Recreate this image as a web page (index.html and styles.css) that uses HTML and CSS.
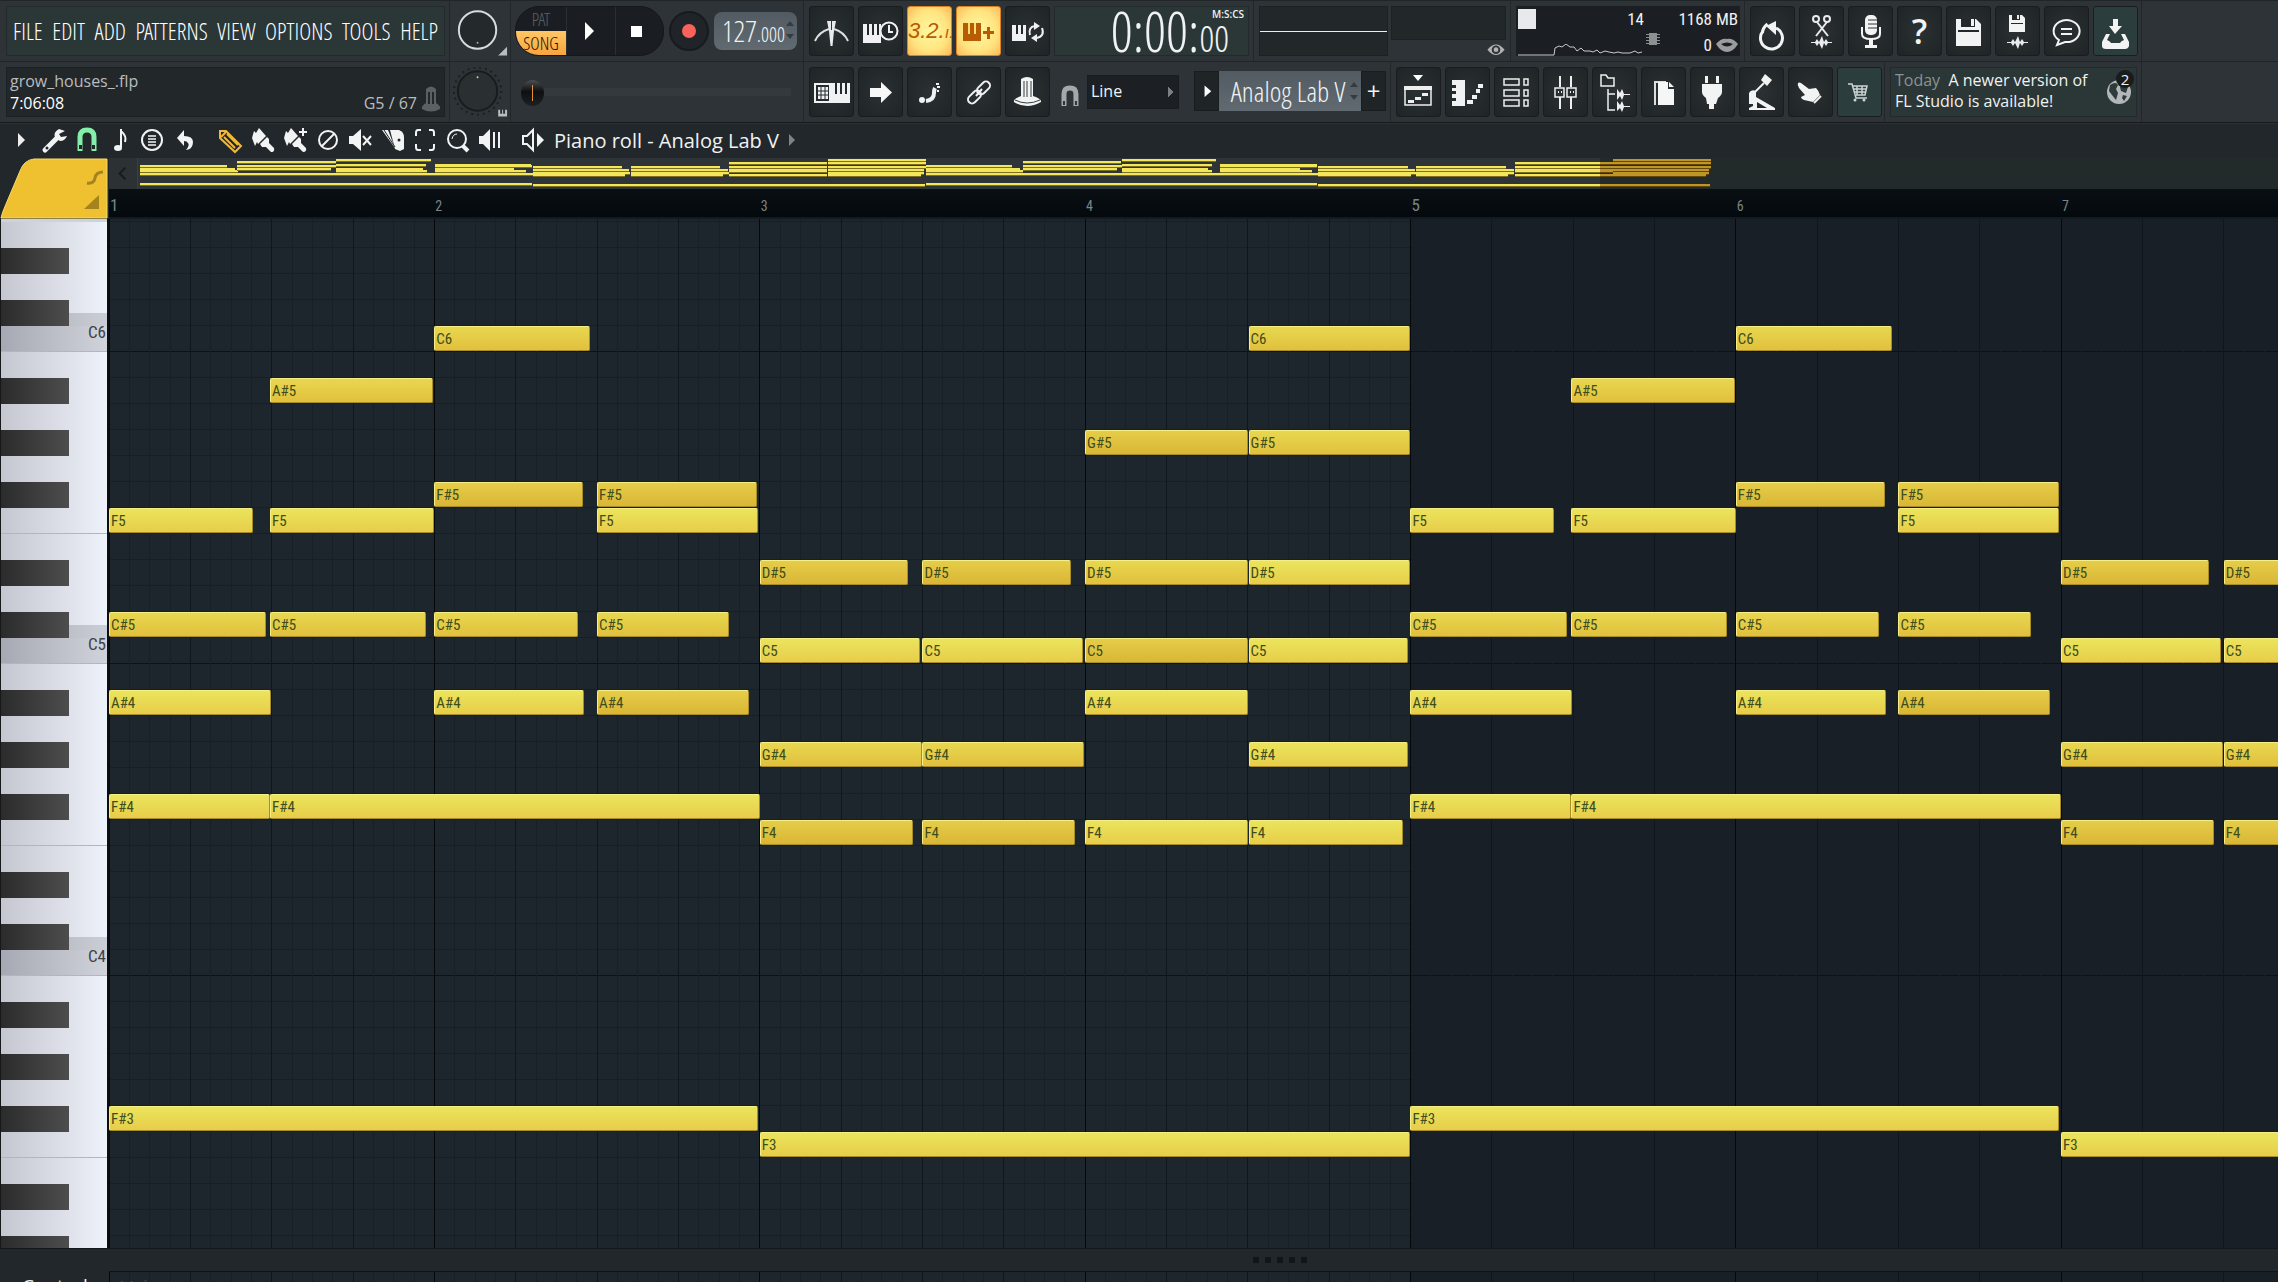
FILE: index.html
```
<!DOCTYPE html>
<html lang="en">
<head>
<meta charset="utf-8">
<title>Piano roll - Analog Lab V</title>
<link rel="stylesheet" href="styles.css">
</head>
<body>
<header class="toolbar">
  <div class="bar">
    <div class="group g-menu">
      <nav class="menu panel green">
        <button>FILE</button><button>EDIT</button><button>ADD</button><button>PATTERNS</button><button>VIEW</button><button>OPTIONS</button><button>TOOLS</button><button>HELP</button>
      </nav>
    </div>
    <div class="group g-knob">
      <svg class="knob" viewBox="0 0 61 50"><circle cx="28" cy="24" r="19" fill="#24292c" stroke="#d5dcdf" stroke-width="2"/><circle cx="28" cy="37" r="1" fill="#aaa"/><path d="M58 41v9h-9z" fill="#b9bdbf"/></svg>
    </div>
    <div class="group g-transport">
      <div class="transport">
        <div class="mode"><button class="pat">PAT</button><button class="song">SONG</button></div>
        <button class="tbtn" aria-label="Play"><svg viewBox="0 0 45 48"><path d="M18 15l9 9-9 9z" fill="#fff"/></svg></button>
        <button class="tbtn" aria-label="Stop"><svg viewBox="0 0 45 48"><path d="M15 19h11v11H15z" fill="#fff"/></svg></button>
      </div>
      <button class="record" aria-label="Record"><span></span></button>
      <div class="tempo"><span>127<small>.000</small></span><svg viewBox="0 0 8 20"><path d="M4 1l4 5H0zM4 19l4-5H0z" fill="#343c41"/></svg></div>
    </div>
    <div class="group g-mid">
      <button class="btn" aria-label="Metronome"><svg viewBox="0 0 45 50"><path d="M6 35Q10 26 20 23M39 35Q35 26 25 23" fill="none" stroke="#dde0e1" stroke-width="2"/><path d="M18 15h9l-2 10-1.500 15h-2L20 25z" fill="#e8eaeb"/><path d="M22.500 14v10" stroke="#333" stroke-width="1"/></svg></button>
      <button class="btn" aria-label="Wait for input"><svg viewBox="0 0 45 50"><path d="M5 18h18v19H5z" fill="#f0f1f2"/><path d="M10 18v11M15 18v11M20 18v11" stroke="#23282b" stroke-width="2"/><circle cx="31" cy="25" r="8.500" fill="#23282b" stroke="#f0f1f2" stroke-width="2"/><path d="M31 19v7h4" fill="none" stroke="#f0f1f2" stroke-width="2"/></svg></button>
      <button class="btn lit countdown">3.2.<small>ı.</small></button>
      <button class="btn lit" aria-label="Overdub"><svg viewBox="0 0 45 50"><path d="M7 17h18v18H7zM31 21h3v4h4v3h-4v5h-3v-5h-4v-3h4z" fill="#b55c05"/><path d="M13 17v11M19 17v11" stroke="#ffdd75" stroke-width="2"/></svg></button>
      <button class="btn" aria-label="Loop recording"><svg viewBox="0 0 45 50"><path d="M7 19h14v16H7z" fill="#f0f1f2"/><path d="M12 19v9M17 19v9" stroke="#23282b" stroke-width="2"/><path d="M25 29q-2-8 5-9M37 22q3 8-5 10" fill="none" stroke="#f0f1f2" stroke-width="2"/><path d="M29 16l6 4-6 4zM32 28l-6 4 6 4z" fill="#f0f1f2"/></svg></button>
      <div class="time panel green"><span>0:00:<small>00</small></span><em>M:S:CS</em></div>
    </div>
    <div class="group g-scope">
      <div class="scope"></div>
      <div class="scope-side"><div class="spectrum"></div><svg viewBox="0 0 20 14"><path d="M1 7Q10-4 19 7Q10 18 1 7z" fill="#b0b2b3"/><circle cx="10" cy="7" r="3.500" fill="none" stroke="#2d3337" stroke-width="2"/></svg></div>
    </div>
    <div class="group g-cpu">
      <div class="cpu">
        <div class="cpu-left">
          <div class="cpu-top"><i></i><b>14</b></div>
          <svg viewBox="0 0 126 12"><path d="M0 11h36l1-7 4-2 3 1 4-3 4 3 4 0 3 4 4-3 3 3h6l3 1 4-2 3 3 5-2 4 1 5 1 4-1 4 1 8 0 5-2 3 2 4-1" fill="none" stroke="#c8cbcc"/></svg>
        </div>
        <div class="cpu-right">
          <b>1168 MB</b>
          <div><svg class="chip" viewBox="0 0 14 12"><path d="M3 0h8v12H3zM0 1h14v1H0zM0 4h14v1H0zM0 7h14v1H0zM0 10h14v1H0z" fill="#8d9091"/></svg><b>0</b><svg class="mouth" viewBox="0 0 22 14"><path d="M0 6q5-6 11-5q6-1 11 5q-5 8-11 8T0 6z" fill="#9a9c9d"/><path d="M5 6q6-3 12 0q-6 5-12 0z" fill="#1b1f24"/></svg></div>
        </div>
      </div>
    </div>
    <div class="group g-tools">
      <button class="btn" aria-label="Undo"><svg viewBox="0 0 45 50"><path d="M13 24a11 11 0 1 0 13-3" fill="none" stroke="#f2f3f3" stroke-width="3" transform="translate(0 1)"/><path d="M12.500 27q0-5 5-9" fill="none" stroke="#f2f3f3" stroke-width="3"/><path d="M26 15v14l-10-9z" fill="#f2f3f3"/></svg></button>
      <button class="btn" aria-label="Cut"><svg viewBox="0 0 45 50"><g fill="none" stroke="#e9ebec" stroke-width="2"><path d="M18 16l11 14M28 16L17 30"/><circle cx="17" cy="13" r="3"/><circle cx="28" cy="13" r="3"/></g><path d="M12 36h4l2-3 2 3 3-6 2 6 2-3 2 3h4v1h-4l-2 3-2-3-2 6-3-6-2 3-2-3h-4z" fill="#e9ebec"/></svg></button>
      <button class="btn" aria-label="Microphone"><svg viewBox="0 0 45 50"><rect x="17" y="9" width="12" height="20" rx="5" fill="#f2f3f3"/><path d="M20 14h9M20 18h9M20 22h9" stroke="#333"/><path d="M14 21v7q0 5 9 5t9-5v-7" fill="none" stroke="#f2f3f3" stroke-width="2"/><path d="M21 33h4v6h4v3H17v-3h4z" fill="#f2f3f3"/></svg></button>
      <button class="btn help" aria-label="Help">?</button>
      <button class="btn" aria-label="Save"><svg viewBox="0 0 45 50"><path d="M10 13h20l5 5v22H10z" fill="#f2f3f3"/><path d="M15 13h14v8H15zM12 24h21v2H12z" fill="#23282b"/><path d="M25 13h3v7h-3z" fill="#f2f3f3"/></svg></button>
      <button class="btn" aria-label="Save version"><svg viewBox="0 0 45 50"><path d="M14 9h13l3 3v14H14z" fill="#f2f3f3"/><path d="M17 9h8v5h-8zM16 17h12v1H16z" fill="#23282b"/><path d="M22 9h2v4h-2zM12 36h4l2-3 2 3 3-6 2 6 2-3 2 3h4v1h-4l-2 3-2-3-2 6-3-6-2 3-2-3h-4z" fill="#e9ebec"/></svg></button>
      <button class="btn" aria-label="Comments"><svg viewBox="0 0 45 50"><path d="M15 34a13 11 0 1 1 6 2l-8 3z" fill="none" stroke="#f2f3f3" stroke-width="2"/><path d="M17 26h11M17 31h11" stroke="#f2f3f3" stroke-width="2" transform="translate(0 -3)"/></svg></button>
      <button class="btn teal" aria-label="Download"><svg viewBox="0 0 45 50"><path d="M20 13h5v7h4l-7 8-6-8h4zM9 36l4-8h4l-3 6q3 1 4 3h9q1-2 4-3l-3-6h4l4 8v4q-1 3-4 3H13q-4 0-4-3z" fill="#f2f3f3"/></svg></button>
    </div>
  </div>

  <div class="bar">
    <div class="group g-menu">
      <div class="hint panel">
        <p>grow_houses_.flp</p>
        <div><strong>7:06:08</strong><span>G5 / 67</span><svg viewBox="0 0 20 26"><path d="M5 3q5-5 10 0v14q5 3 4 6-9 5-18 0-1-3 4-6z" fill="#5b6062"/><path d="M8 6v12M12 6v12" stroke="#22272b" stroke-width="2"/></svg></div>
      </div>
    </div>
    <div class="group g-knob">
      <svg class="knob" viewBox="0 0 61 50"><circle cx="28" cy="24" r="24" fill="none" stroke="#1b1f22" stroke-width="2" stroke-dasharray="2 4"/><circle cx="28" cy="24" r="20" fill="#2a2f32" stroke="#181c1e" stroke-width="2"/><circle cx="28" cy="10" r="1" fill="#ccc"/><path d="M49 43h2v4h2v-4h1v4h2v-4h2v7h-9z" fill="#b9bdbf"/></svg>
    </div>
    <div class="group g-transport slide"><input type="range" aria-label="Song position" min="0" max="100" value="0"></div>
    <div class="group g-mid2">
      <button class="btn" aria-label="Typing keyboard"><svg viewBox="0 0 45 50"><path d="M6 17h15v18H6z" fill="none" stroke="#f0f1f2" stroke-width="2"/><path d="M9 20h10v12H9z" fill="#f0f1f2"/><path d="M12 20v12M16 20v12M9 24h10M9 28h10" stroke="#23282b"/><path d="M22 16h19v20H22z" fill="#f0f1f2"/><path d="M27 16v11M32 16v11M37 16v11" stroke="#23282b" stroke-width="2"/></svg></button>
      <button class="btn" aria-label="Step"><svg viewBox="0 0 45 50"><path d="M12 21h11v-6l11 10.500L23 36v-6H12z" fill="#f7f8f8"/></svg></button>
      <button class="btn" aria-label="Slide"><svg viewBox="0 0 45 50"><circle cx="15" cy="33" r="3" fill="#f0f1f2"/><path d="M19 34q8-1 8-8 0-3 1-5" fill="none" stroke="#f0f1f2" stroke-width="4"/><path d="M29 17h3M30 20h3M30 24h2" stroke="#f0f1f2" stroke-width="2"/></svg></button>
      <button class="btn" aria-label="Link"><svg viewBox="0 0 45 50"><g fill="none" stroke="#f0f1f2" stroke-width="2"><rect x="11" y="26" width="15" height="8" rx="4" transform="rotate(-45 18.500 30)"/><rect x="20" y="17" width="15" height="8" rx="4" transform="rotate(-45 27.500 21)"/></g><path d="M20 29l6-7" stroke="#f0f1f2" stroke-width="2"/></svg></button>
      <button class="btn" aria-label="Multilink"><svg viewBox="0 0 45 50"><path d="M16 12q6-4 12 0v17q9 3 8 6-14 8-27 0-1-3 7-6z" fill="#f2f3f3"/><path d="M19 14v16M22 14v16M26 14v16" stroke="#383d40" stroke-width="1"/><path d="M10 33q12 6 25 0" fill="none" stroke="#383d40"/></svg></button>
      <svg class="magnet" viewBox="0 0 20 22"><path d="M4 21V9q0-6 6-6t6 6v12" fill="none" stroke="#a6a9aa" stroke-width="5"/><path d="M3 16h2v4H3zM15 16h2v4h-2z" fill="#2d3337"/></svg>
      <select class="snap" aria-label="Snap"><option>Line</option></select>
      <div class="channel">
        <button aria-label="Preview"><svg viewBox="0 0 24 40"><path d="M10 14l7 6-7 6z" fill="#fff"/></svg></button>
        <div class="channel-name"><span>Analog Lab V</span><svg viewBox="0 0 8 20"><path d="M4 1l4 5H0zM4 19l4-5H0z" fill="#343c41"/></svg></div>
        <button>+</button>
      </div>
    </div>
    <div class="group g-windows">
      <button class="btn" aria-label="Playlist"><svg viewBox="0 0 45 50"><path d="M17 8h10l-5 6z" fill="#fff"/><path d="M9 20h26v18H9z" fill="none" stroke="#eee" stroke-width="1.500"/><path d="M8 19h28v4H8zM12 33h6v3h-6zM19 30h6v3h-6zM26 26h6v3h-6z" fill="#eee"/></svg></button>
      <button class="btn" aria-label="Piano roll"><svg viewBox="0 0 45 50"><path d="M7 13h13v26H7v-5h4v-3H7v-4h4v-3H7v-3h4v-3H7zM22 33h6v4h-6zM27 28h5v4h-5zM31 22h4v4h-4zM33 17h5v4h-5z" fill="#f0f1f2"/></svg></button>
      <button class="btn" aria-label="Channel rack"><svg viewBox="0 0 45 50"><path d="M10 12h15v6H10zM30 12h4v6h-4zM10 23h15v6H10zM30 23h4v6h-4zM10 33h15v6H10zM30 33h4v6h-4z" fill="none" stroke="#eee" stroke-width="1.500"/></svg></button>
      <button class="btn" aria-label="Mixer"><svg viewBox="0 0 45 50"><path d="M17 9v11M28 9v11M17 30v12M28 30v12" stroke="#eee" stroke-width="2"/><path d="M12 21h9v9h-9zM24 21h9v9h-9z" fill="none" stroke="#eee" stroke-width="1.500"/><path d="M15 25h1M18 25h1M27 25h1M30 25h1" stroke="#eee" stroke-width="2"/></svg></button>
      <button class="btn" aria-label="Browser"><svg viewBox="0 0 45 50"><path d="M9 8h5l2 3h6v8H9zM16 22v21h7M16 27h7" fill="none" stroke="#eee" stroke-width="1.500"/><path d="M25 22l3 4 2-4 2 5h6v1h-6l-2 5-2-4-3 4zM25 34l3 4 2-4 2 5h6v1h-6l-2 5-2-4-3 3z" fill="#eee"/></svg></button>
      <button class="btn" aria-label="Project files"><svg viewBox="0 0 45 50"><path d="M13 14h12v2H15v22h-2z" fill="#ddd"/><path d="M17 15h10v7h6v16H17z" fill="#f5f6f6"/><path d="M28 15l5 5h-5z" fill="#f5f6f6"/></svg></button>
      <button class="btn" aria-label="Plugins"><svg viewBox="0 0 45 50"><path d="M15 9h3v7h-3zM26 9h3v7h-3zM12 17h20v8q0 3-4 6l-2 6h-2v5h-5v-5h-2l-1-6q-4-3-4-6z" fill="#f2f3f3"/></svg></button>
      <button class="btn" aria-label="Tempo tapper"><svg viewBox="0 0 45 50"><path d="M26 7l7 6-5 6-6-6z" fill="#f2f3f3"/><path d="M25 16L15 26" stroke="#f2f3f3" stroke-width="2"/><path d="M10 26q2-4 7-2v13h-7z" fill="#f2f3f3"/><path d="M17 30l19 11v2H10v-2l4-2v-6z" fill="#f2f3f3"/><path d="M18 35l10 6H18z" fill="#23282b"/></svg></button>
      <button class="btn" aria-label="Touch"><svg viewBox="0 0 45 50"><path d="M10 16q1-1 3 0l8 6 7-1q3 3 4 7l-7 7-9-2q-3-1-3-3l4-2-6-7q-2-3-1-5z" fill="#f2f3f3"/><path d="M26 36l7-7" stroke="#f2f3f3" stroke-width="2"/></svg></button>
      <button class="btn teal" aria-label="Shop"><svg viewBox="0 0 45 50"><path d="M11 17h4l4 14h11M16 19h14l-2 9H19M16 22h13M17 25h12M20 19v9M25 19v9" fill="none" stroke="#cdd3d3" stroke-width="1.500"/><circle cx="18" cy="33" r="1.500" fill="#cdd3d3"/><circle cx="27" cy="33" r="1.500" fill="#cdd3d3"/></svg></button>
    </div>
    <div class="group g-news">
      <div class="news panel green">
        <p><span>Today</span>&nbsp; A newer version of<br>FL Studio is available!</p>
        <div class="globe"><svg viewBox="0 0 26 26"><circle cx="13" cy="13" r="12" fill="#b4b7b8"/><path d="M4 6q6-4 8 0l-2 4 2 4-2 7-4-5-3-4zM15 4l7 4-2 6-5-2-1-4zM17 16l4 1-3 5-2-3z" fill="#2e3b3b"/></svg><em>2</em></div>
      </div>
    </div>
  </div>
</header>

<section class="editor-bar">
  <div class="ed-group ed-menu">
    <button class="ed" aria-label="Menu"><svg viewBox="0 0 32 32"><path d="M12 9l7 7-7 7z" fill="#eee"/></svg></button>
    <button class="ed" aria-label="Tools"><svg viewBox="0 0 32 32"><path d="M6 26L18 14" stroke="#f2f3f3" stroke-width="5" stroke-linecap="round"/><path d="M26 7l-6-2q-6 3-4 9l5 3q5 0 7-5l-6 1-2-3z" fill="#f2f3f3"/><circle cx="8" cy="24" r="1.500" fill="#22272b"/></svg></button>
    <button class="ed" aria-label="Snap"><svg viewBox="0 0 32 32"><path d="M9 27V13q0-7 7-7t7 7v14" fill="none" stroke="#83efa9" stroke-width="5"/><path d="M8 21h3v4H8zM21 21h3v4h-3z" fill="#22272b"/></svg></button>
    <button class="ed" aria-label="Stamp"><svg viewBox="0 0 32 32"><path d="M17 5v18M17 7q6 5 4 11" fill="none" stroke="#f2f3f3" stroke-width="2"/><ellipse cx="14" cy="24" rx="4" ry="3" fill="#f2f3f3"/></svg></button>
    <button class="ed" aria-label="List"><svg viewBox="0 0 32 32"><circle cx="16" cy="16" r="10" fill="none" stroke="#f2f3f3" stroke-width="2"/><path d="M12 12h8M12 15h8M12 18h8M12 21h8" stroke="#f2f3f3" stroke-width="1.500"/></svg></button>
    <button class="ed" aria-label="Undo"><svg viewBox="0 0 32 32"><path d="M15 6v6q9 0 9 6 0 7-7 8 4-5 2-7-1-2-4-2v5l-7-8z" fill="#f2f3f3"/></svg></button>
  </div>
  <div class="ed-group ed-tools">
    <button class="ed" aria-label="Draw"><svg viewBox="0 0 32 32"><path d="M6 14V7h6l15 15-6 6zM7 13l5-5M10 13l11 11M13 10l11 11" fill="none" stroke="#f0b93c" stroke-width="2"/></svg></button>
    <button class="ed" aria-label="Paint"><svg viewBox="0 0 32 32"><path d="M5 14l2-7 2 2 3-5 7 8-8 8-1-2-2 4zM13 20l7-7 2 2v4l5 5q1 4-3 4l-5-5h-4z" fill="#f2f3f3"/></svg></button>
    <button class="ed" aria-label="Paint drum"><svg viewBox="0 0 32 32"><path d="M5 14l2-7 2 2 3-5 7 8-8 8-1-2-2 4zM13 20l7-7 2 2v4l5 5q1 4-3 4l-5-5h-4z" fill="#f2f3f3"/><path d="M24 4v8M20 8h8" stroke="#f2f3f3" stroke-width="2"/></svg></button>
    <button class="ed" aria-label="Delete"><svg viewBox="0 0 32 32"><circle cx="16" cy="16" r="9" fill="none" stroke="#f2f3f3" stroke-width="2"/><path d="M10 22l12-12" stroke="#f2f3f3" stroke-width="2"/></svg></button>
    <button class="ed" aria-label="Mute"><svg viewBox="0 0 32 32"><path d="M5 12h4l8-7v22l-8-7H5z" fill="#f2f3f3"/><path d="M19 12l8 9M27 12l-8 9" stroke="#f2f3f3" stroke-width="2"/></svg></button>
    <button class="ed" aria-label="Slice"><svg viewBox="0 0 32 32"><path d="M13 6h9q5 2 5 7v12l-4 2-5-2z" fill="#f2f3f3"/><path d="M5 6h6l7 18z" fill="#f2f3f3"/><path d="M7 6l11 17" stroke="#22272b" stroke-width="1"/><circle cx="22" cy="16" r="1.500" fill="#22272b"/></svg></button>
    <button class="ed" aria-label="Select"><svg viewBox="0 0 32 32"><path d="M12 6H9q-2 0-2 3v3M20 6h3q2 0 2 3v3M12 26H9q-2 0-2-3v-3M20 26h3q2 0 2-3v-3" fill="none" stroke="#f2f3f3" stroke-width="2"/></svg></button>
    <button class="ed" aria-label="Zoom"><svg viewBox="0 0 32 32"><circle cx="15" cy="15" r="9" fill="none" stroke="#f2f3f3" stroke-width="2"/><path d="M10 15q1-5 5-5" fill="none" stroke="#f2f3f3"/><path d="M21 22l5 5" stroke="#f2f3f3" stroke-width="4"/></svg></button>
    <button class="ed" aria-label="Playback"><svg viewBox="0 0 32 32"><path d="M5 12h4l7-7v22l-7-7H5z" fill="#f2f3f3"/><path d="M20 8v16M25 8v16" stroke="#f2f3f3" stroke-width="2"/></svg></button>
  </div>
  <button class="ed" aria-label="Preview"><svg viewBox="0 0 32 32"><path d="M6 12h4l6-6v20l-6-6H6z" fill="none" stroke="#f2f3f3" stroke-width="2"/><path d="M20 9l7 7-7 7z" fill="#f2f3f3"/></svg></button>
  <h1>Piano roll - Analog Lab V</h1>
  <svg class="more" viewBox="0 0 8 16"><path d="M1 2l6 6-6 6z" fill="#7e8385"/></svg>
</section>

<main class="roll">
  <div class="corner">
    <svg viewBox="0 0 109 61"><path d="M1 60Q2 55 6 46L20 13Q24 2 34 1H107V60z" fill="#efc02f" stroke="#f6dc6a"/><path d="M87 25q7 1 8-5t8-6" fill="none" stroke="#a5831f" stroke-width="3"/><path d="M99 37v14H84z" fill="#a5831f"/></svg>
  </div>
  <div class="timeline">
    <div class="overview">
      <button aria-label="Scroll left"><svg viewBox="0 0 29 30"><path d="M17 9l-6 6 6 6" fill="none" stroke="#181b1d" stroke-width="2"/></svg></button>
      <div class="map" id="map"></div>
    </div>
    <div class="ruler" id="ruler"></div>
  </div>
  <div class="keys" id="keys"></div>
  <div class="grid">
    <svg class="lines" id="lines"></svg>
    <div class="notes" id="notes"></div>
  </div>
</main>

<div class="splitter"><i></i><i></i><i></i><i></i><i></i></div>
<footer class="control">
  <span class="control-label">Control</span>
  <div class="control-grid">Velocity<svg class="lines" id="controlLines"></svg></div>
</footer>
<script src="script.js"></script>
</body>
</html>
```

FILE: styles.css
```
* {
    box-sizing: border-box;
}
body {
    --narrow: "Open Sans Condensed Light", "Roboto Condensed", "Liberation Sans Narrow", sans-serif;
    margin: 0;
    height: 100vh;
    display: flex;
    flex-direction: column;
    overflow: hidden;
    background: #22272b;
    color: #f0f2f3;
    font-family: "Open Sans", "Noto Sans", sans-serif;
    font-size: 16px;
}
button {
    border: 0;
    padding: 0;
    margin: 0;
    background: none;
    color: inherit;
    font: inherit;
}
svg {
    display: block;
}
p, h1 {
    margin: 0;
}
em, i {
    font-style: normal;
}

/* top toolbar */
.toolbar {
    background: #2d3337;
    border-bottom: 1px solid #171b1d;
}
.bar {
    display: flex;
    height: 61px;
    border-top: 1px solid #202528;
}
.group {
    display: flex;
    flex: none;
    padding: 5px 4px 5px 5px;
    gap: 4px;
    border-right: 1px solid #22272a;
}
.g-menu { width: 450px; padding-left: 6px; }
.g-knob { width: 61px; padding: 5px 0; }
.g-transport { width: 293px; padding-left: 4px; gap: 5px; }
.g-mid { width: 450px; }
.g-scope { width: 257px; gap: 3px; }
.g-cpu { width: 234px; }
.g-tools { width: 397px; }
.g-mid2 { width: 587px; align-items: center; }
.g-windows { width: 494px; }
.g-news { width: 257px; }
.panel {
    flex: 1;
    height: 50px;
    background: #22272a;
    border: 1px solid #1d2124;
}
.green {
    background: #2b3637;
    border-color: #232a2b;
}
.menu {
    display: flex;
    justify-content: space-between;
    padding: 0 6px;
    font-family: var(--narrow);
    font-size: 23px;
    color: #fff;
}
.knob {
    width: 61px;
    height: 50px;
}
.transport {
    display: flex;
    width: 149px;
    height: 50px;
    border-radius: 24px;
    overflow: hidden;
    background: #1a1e22;
    border: 1px solid #15181a;
}
.mode {
    display: flex;
    flex-direction: column;
    width: 50px;
}
.mode button {
    flex: 1;
    font-family: var(--narrow);
    font-size: 18px;
    line-height: 24px;
}
.mode .pat {
    color: #5b6063;
}
.mode .song {
    background: linear-gradient(#ffc766, #f9a43c);
    color: #1a1002;
}
.tbtn {
    flex: 1;
    border-left: 1px solid #2a2f33;
}
.tbtn svg {
    width: 45px;
    height: 48px;
}
.record {
    width: 40px;
    height: 40px;
    margin-top: 5px;
    border-radius: 50%;
    background: #202428;
    border: 2px solid #181b1d;
    display: grid;
    place-items: center;
}
.record span {
    width: 14px;
    height: 14px;
    border-radius: 50%;
    background: #f9625b;
}
.tempo {
    width: 83px;
    height: 38px;
    margin-top: 6px;
    padding: 0 3px 2px 8px;
    display: flex;
    align-items: center;
    justify-content: space-between;
    border-radius: 8px;
    background: linear-gradient(#515b61, #606a70);
    font-family: var(--narrow);
    font-size: 29px;
}
.tempo small {
    font-size: 20px;
}
.tempo svg, .channel-name svg {
    width: 8px;
    height: 20px;
}
.btn {
    width: 45px;
    height: 50px;
    flex: none;
    border-radius: 3px;
    background: radial-gradient(#2b3033, #1f2427);
    border: 1px solid #191d1f;
}
.btn svg {
    width: 45px;
    height: 50px;
    margin: -1px;
}
.teal {
    background: #2b3d3d;
}
.lit {
    background: radial-gradient(#fff8a0, #ffe480 60%, #fdb95a);
    border-color: #d98420;
    color: #b55c05;
}
.countdown {
    font: italic 22px "Liberation Sans Narrow", "Liberation Sans", sans-serif;
}
.countdown small {
    font-size: 16px;
}
.help {
    font-size: 34px;
    font-weight: 600;
    line-height: 46px;
}
.time {
    display: flex;
    justify-content: flex-end;
    position: relative;
    font-family: var(--narrow);
    font-size: 55px;
    line-height: 48px;
}
.time span {
    display: flex;
    align-items: baseline;
    padding-right: 19px;
}
.time small {
    font-size: 37px;
    line-height: 34px;
}
.time em {
    position: absolute;
    top: 1px;
    right: 4px;
    font: 600 10px/12px "Open Sans", sans-serif;
}
.scope {
    width: 129px;
    height: 50px;
    background: linear-gradient(#eee, #eee) 0 24px / 100% 1px no-repeat #22272a;
    border: 1px solid #1d2124;
}
.scope-side {
    flex: 1;
    display: flex;
    flex-direction: column;
    align-items: flex-end;
    gap: 3px;
}
.spectrum {
    width: 100%;
    height: 35px;
    background: #22272a;
    border: 1px solid #1d2124;
}
.scope-side svg {
    width: 20px;
    height: 14px;
}
.cpu {
    flex: 1;
    display: flex;
    justify-content: space-between;
    height: 50px;
    padding: 0 2px;
    background: #1b1f24;
}
.cpu b {
    font-weight: 400;
    font-family: "Roboto Condensed", "Liberation Sans Narrow", sans-serif;
    font-size: 17px;
    line-height: 26px;
}
.cpu-left {
    width: 126px;
}
.cpu-top {
    display: flex;
    justify-content: space-between;
    height: 38px;
}
.cpu-top i {
    width: 18px;
    height: 20px;
    margin-top: 3px;
    background: #e8e9ea;
}
.cpu-left svg {
    width: 126px;
    height: 12px;
}
.cpu-right {
    width: 92px;
    text-align: right;
}
.cpu-right div {
    display: flex;
    align-items: center;
    justify-content: flex-end;
    gap: 4px;
}
.chip {
    width: 14px;
    height: 12px;
    margin: 0 auto 12px 0;
}
.mouth {
    width: 22px;
    height: 14px;
}
.hint {
    padding: 2px 3px 0 3px;
    font-size: 16px;
    line-height: 22px;
    color: #b9bcbe;
}
.hint div {
    display: flex;
    align-items: center;
}
.hint strong {
    flex: 1;
    font-weight: 400;
    color: #fff;
}
.hint svg {
    width: 20px;
    height: 26px;
    margin: -8px 0 0 4px;
}
.slide {
    padding: 5px 12px 5px 10px;
}
.slide input {
    -webkit-appearance: none;
    appearance: none;
    flex: 1;
    margin: 0;
    background: linear-gradient(#33393c, #33393c) 0 21px / 100% 8px no-repeat;
}
.slide input::-webkit-slider-thumb {
    -webkit-appearance: none;
    width: 23px;
    height: 26px;
    margin-top: 2px;
    border-radius: 50%;
    background: linear-gradient(90deg, transparent 11px, #e0913a 11px, #e0913a 12px, transparent 12px) 0 5px / 100% 16px no-repeat, linear-gradient(#4a4f52, #0d0f10 45%, #1e2123);
}
.magnet {
    width: 20px;
    height: 22px;
    margin: 8px 3px 0 6px;
}
.snap {
    appearance: none;
    width: 92px;
    height: 34px;
    padding: 0 3px 3px;
    border: 1px solid #191d1f;
    border-radius: 0;
    background: conic-gradient(from 225deg at 100% 50%, #7b8082 90deg, transparent 0) 80px 10px / 6px 12px no-repeat, #1c2024;
    color: #f0f2f3;
    font: 16px "Open Sans", sans-serif;
}
.channel {
    display: flex;
    width: 193px;
    height: 40px;
    margin: 0 0 2px 11px;
}
.channel button {
    width: 25px;
    background: #1f2427;
    border: 1px solid #191d1f;
    font-size: 24px;
    line-height: 34px;
}
.channel-name {
    flex: 1;
    display: flex;
    align-items: center;
    justify-content: space-between;
    padding: 0 3px 0 12px;
    white-space: nowrap;
    background: linear-gradient(#515b61, #606a70);
    font-family: var(--narrow);
    font-size: 28px;
    line-height: 36px;
}
.news {
    display: flex;
    padding: 2px 4px;
    font-size: 16px;
    line-height: 21px;
    white-space: nowrap;
}
.news p {
    flex: 1;
}
.news span {
    color: #8b9292;
}
.globe {
    position: relative;
    width: 26px;
    padding-top: 9px;
}
.globe em {
    position: absolute;
    top: 0;
    right: -2px;
    width: 18px;
    height: 18px;
    border-radius: 50%;
    background: #171c1d;
    font-size: 15px;
    line-height: 18px;
    text-align: center;
}

/* editor toolbar */
.editor-bar {
    display: flex;
    align-items: center;
    height: 35px;
    padding: 0 0 2px 6px;
    border-top: 1px solid #2b3033;
}
.ed-group {
    display: flex;
    justify-content: space-between;
}
.ed-menu {
    width: 195px;
    margin-right: 13px;
}
.ed-tools {
    width: 292px;
    margin-right: 11px;
}
.ed, .ed svg {
    width: 32px;
    height: 32px;
}
.editor-bar h1 {
    margin-left: 5px;
    font-size: 20px;
    font-weight: 400;
}
.more {
    width: 8px;
    height: 16px;
    margin-left: 9px;
}

/* piano roll */
.roll {
    flex: 1;
    min-height: 0;
    display: grid;
    grid-template-columns: 109px 1fr;
    grid-template-rows: 61px minmax(0, 1fr);
}
.timeline {
    display: flex;
    flex-direction: column;
    min-width: 0;
}
.overview {
    display: flex;
    height: 31px;
    background: #22282a;
}
.overview button {
    width: 29px;
    background: #2c3134;
    border-right: 1px solid #3a3f42;
}
.map {
    position: relative;
    flex: 1;
    isolation: isolate;
    background: linear-gradient(90deg, #2e3437 68.3%, #2c4060 0);
}
.map::after {
    content: "";
    position: absolute;
    inset: 0 0 0 68.3%;
    background: rgb(200, 165, 110);
    mix-blend-mode: multiply;
}
.map i {
    position: absolute;
    height: 2px;
    background: #f4e65a;
    box-shadow: 0 1px #7d6f22;
}
.ruler {
    flex: 1;
    display: flex;
    overflow: hidden;
    background: linear-gradient(#090f12, #03090c);
    border-bottom: 2px solid #141b20;
    font-family: "Roboto Condensed", "Liberation Sans Narrow", sans-serif;
    font-size: 14px;
    line-height: 34px;
    color: #7c8488;
}
.ruler span {
    flex: 0 0 15%;
    padding-left: 1px;
}
.ruler .phrase {
    font-size: 17px;
    line-height: 32px;
}
.keys {
    overflow: hidden;
    padding-top: 3px;
    background: #cfd2da;
    border-left: 1px solid #14181a;
    border-right: 2px solid #0b0f12;
}
.key {
    height: 26px;
    background: linear-gradient(90deg, #c4c7d0, #dde0e8 60%, #eef2fb);
}
.key.sharp::before {
    content: "";
    display: block;
    width: 68px;
    height: 26px;
    background: linear-gradient(90deg, #2b2b2c, #4d4d4e);
}
.key.f, .key.c {
    border-bottom: 1px solid #b3b6be;
}
.key.csharp {
    background: linear-gradient(#0000 50%, #00000026 50%), linear-gradient(90deg, #c4c7d0, #dde0e8 60%, #eef2fb);
}
.key.c {
    background: linear-gradient(90deg, #a6a9b3, #d0d3da);
    font-family: "Roboto Condensed", "Liberation Sans Narrow", sans-serif;
    font-size: 17px;
    line-height: 12px;
    text-align: right;
    padding-right: 1px;
    color: #3c4147;
}
.grid {
    position: relative;
    overflow: hidden;
    background: linear-gradient(90deg, #1e262d 60%, #181f26 60%);
}
.lines {
    position: absolute;
    inset: 0;
    width: 100%;
    height: 100%;
    shape-rendering: crispEdges;
}
.lines .step { stroke: #182026; }
.lines .beat { stroke: #10171c; }
.lines .bar-line { stroke: #05090c; }
.lines .row { stroke: #171e24; }
.lines .octave { stroke: #0c1216; }
.note {
    position: absolute;
    height: 25px;
    padding-left: 1px;
    overflow: hidden;
    border: 1px solid #a98e28;
    border-top-color: #f6ee85;
    border-left-color: #f6ee85;
    border-radius: 2px;
    background: linear-gradient(#ebe45c, #e7cd4a);
    color: #3d4d1c;
    font-family: "Roboto Condensed", "Liberation Sans Narrow", sans-serif;
    font-size: 15px;
    line-height: 24px;
}
.note.medium {
    background: linear-gradient(#e8d750, #e1c03d);
}
.note.soft {
    background: linear-gradient(#e5cd49, #dab636);
}

/* bottom of the editor */
.splitter {
    flex: 0 0 23px;
    display: flex;
    justify-content: center;
    align-items: center;
    gap: 6px;
    padding-left: 282px;
    border-top: 1px solid #14181a;
}
.splitter i {
    width: 6px;
    height: 6px;
    background: #121619;
}
.control {
    flex: 0 0 11px;
    display: flex;
    overflow: hidden;
}
.control-label {
    width: 109px;
    padding: 2px 0 0 22px;
    font-size: 19px;
    line-height: 26px;
}
.control-grid {
    position: relative;
    flex: 1;
    padding: 2px 0 0 12px;
    height: 40px;
    border-top: 1px solid #0e1316;
    background: linear-gradient(90deg, #1e262d 60%, #181f26 60%);
    color: #3a444a;
    font-size: 19px;
    line-height: 26px;
}
```

FILE: script.js
```
var NAMES = ['C', 'C#', 'D', 'D#', 'E', 'F', 'F#', 'G', 'G#', 'A', 'A#', 'B'];
var ROW = 26;
var TOP_KEY = 76;          // E6, first full row
var BAR = 384;             // ticks in a bar
var VIEW = BAR * 20 / 3;   // ticks across the window

// name, start, end, velocity (2 = loud, 1 = medium, 0 = soft)
var pattern = [
    ['F5', 0, 170, 2], ['C#5', 0, 185, 1], ['A#4', 0, 191, 2], ['F#4', 0, 190, 2],
    ['A#5', 190, 383, 1], ['F5', 190, 384, 2], ['C#5', 190, 374, 1], ['F#4', 190, 768, 2],
    ['C6', 384, 568, 1], ['F#5', 384, 560, 0], ['C#5', 384, 553, 1], ['A#4', 384, 561, 2],
    ['F#5', 576, 765, 0], ['F5', 576, 766, 2], ['C#5', 576, 732, 1], ['A#4', 576, 755, 0],
    ['F#3', 0, 766, 2], ['F3', 768, 1535, 2],
    ['D#5', 768, 943, 0], ['C5', 768, 957, 2], ['G#4', 768, 959, 1], ['F4', 768, 949, 0],
    ['D#5', 960, 1135, 0], ['C5', 960, 1150, 2], ['G#4', 960, 1151, 1], ['F4', 960, 1140, 0],
    ['G#5', 1152, 1344, 0], ['D#5', 1152, 1344, 1], ['C5', 1152, 1344, 0], ['A#4', 1152, 1344, 2], ['F4', 1152, 1344, 2],
    ['C6', 1345, 1536, 1], ['G#5', 1345, 1536, 1], ['D#5', 1345, 1536, 2], ['C5', 1345, 1533, 2],
    ['G#4', 1345, 1533, 2], ['F4', 1345, 1527, 2]
];

function keyNumber(name) {
    var octave = parseInt(name.slice(-1));
    return octave * 12 + NAMES.indexOf(name.slice(0, -1));
}

function drawNotes() {
    var notes = '';
    var map = '';
    for (var p = 0; p < 2; p++) {
        pattern.forEach(function (n) {
            var key = keyNumber(n[0]);
            var start = n[1] + p * BAR * 4;
            var len = n[2] - n[1];
            var vel = ['soft', 'medium', 'loud'][n[3]];
            notes += '<div class="note ' + vel + '" style="left:' + start / VIEW * 100 + '%;width:' + len / VIEW * 100 +
                '%;top:' + ((TOP_KEY - key) * ROW + 3) + 'px">' + n[0] + '</div>';
            map += '<i style="left:' + (0.1 + start / 3072 * 73.4) + '%;width:' + len / 3072 * 73.4 +
                '%;top:' + Math.round(1 + (72 - key) * 0.8) + 'px"></i>';
        });
    }
    document.getElementById('notes').innerHTML = notes;
    document.getElementById('map').innerHTML = map;
}

function drawLines(id, rows) {
    var out = '';
    for (var i = 0; i < rows; i++) {
        var y = i * ROW + 2;
        out += '<line class="' + ((TOP_KEY - i) % 12 == 11 ? 'octave' : 'row') + '" x1="0" x2="100%" y1="' + y + '" y2="' + y + '"/>';
    }
    for (var s = 0; s <= 107; s++) {
        var cls = s % 16 == 0 ? 'bar-line' : s % 4 == 0 ? 'beat' : 'step';
        var x = s * 24 / VIEW * 100 + '%';
        out += '<line class="' + cls + '" x1="' + x + '" x2="' + x + '" y1="0" y2="100%"/>';
    }
    document.getElementById(id).innerHTML = out;
}

function drawKeys() {
    var out = '';
    for (var k = TOP_KEY; k > TOP_KEY - 40; k--) {
        var name = NAMES[k % 12];
        var cls = 'key';
        if (name.length == 2) cls += ' sharp';
        if (name == 'C#') cls += ' csharp';
        if (name == 'C') cls += ' c';
        if (name == 'F') cls += ' f';
        out += '<div class="' + cls + '">' + (name == 'C' ? 'C' + Math.floor(k / 12) : '') + '</div>';
    }
    document.getElementById('keys').innerHTML = out;
}

function drawRuler() {
    var out = '';
    for (var b = 1; b <= 7; b++) {
        out += '<span' + (b % 4 == 1 ? ' class="phrase"' : '') + '>' + b + '</span>';
    }
    document.getElementById('ruler').innerHTML = out;
}

drawKeys();
drawRuler();
drawLines('lines', 40);
drawLines('controlLines', 0);
drawNotes();
```
